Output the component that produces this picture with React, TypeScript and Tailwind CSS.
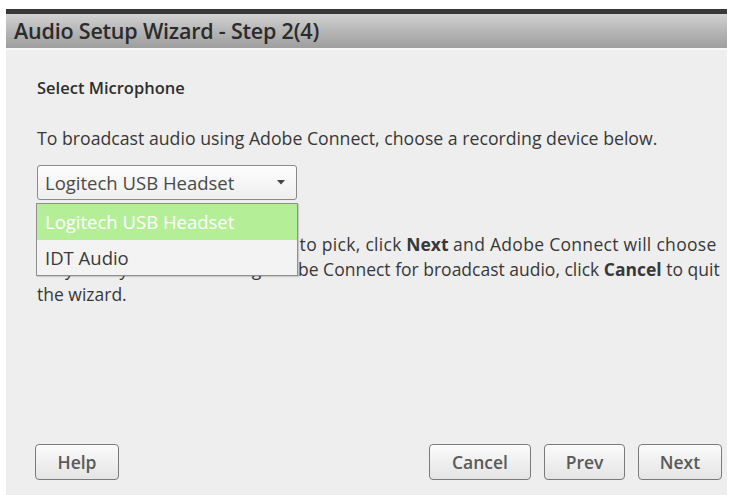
import React from "react";

const font = { fontFamily: '"Open Sans", "Liberation Sans", sans-serif' };

const WizardButton = ({ label, className }: { label: string; className?: string }) => (
  <button
    className={
      "h-[36px] rounded-[4px] border border-[#7a7a7a] bg-gradient-to-b from-[#fbfbfb] to-[#e4e4e4] text-[17.5px] font-semibold text-[#5a5a5a] shadow-[inset_0_1px_0_#ffffff] " +
      (className ?? "")
    }
  >
    {label}
  </button>
);

const App = () => {
  return (
    <div
      className="w-[729px] h-[495px] bg-white pl-[6px] pr-[2px] pt-[9px] flex flex-col overflow-hidden"
      style={font}
    >
      {/* window frame top edge */}
      <div className="h-[5px] bg-[#383838]" />

      {/* title bar */}
      <div className="h-[34px] bg-gradient-to-b from-[#d2d2d2] via-[#b6b6b6] to-[#9e9e9e] flex items-center pl-[8px]">
        <span className="text-[21.5px] font-semibold text-[#2b2b2b] tracking-[-0.2px]">
          Audio Setup Wizard - Step 2(4)
        </span>
      </div>
      <div className="h-[2px] bg-[#f8f8f8]" />

      {/* body */}
      <div className="flex-1 bg-[#eeeeee] pl-[31px] pr-[5px] pb-[15px] flex flex-col text-[#383838]">
        <div className="mt-[28px] text-[16.5px] font-semibold text-[#2e2e2e] leading-[20px]">
          Select Microphone
        </div>

        <p className="mt-[30px] text-[17.7px] leading-[20px] whitespace-nowrap">
          To broadcast audio using Adobe Connect, choose a recording device below.
        </p>

        {/* device select */}
        <div className="relative mt-[17px] w-[260px]">
          <div className="h-[35px] rounded-[3px] border border-[#8a8a8a] bg-gradient-to-b from-[#fdfdfd] to-[#efefef] flex items-center justify-between pl-[7px] pr-[11px]">
            <span className="text-[18.5px] text-[#4a4a4a]">Logitech USB Headset</span>
            <svg width="8" height="5" viewBox="0 0 8 5">
              <path d="M0 0 H8 L4 4.5 Z" fill="#444" />
            </svg>
          </div>

          {/* open list */}
          <div className="absolute left-[-1px] top-[38px] w-[262px] border border-[#8f8f8f] bg-[#f3f3f3] shadow-[1px_1px_1px_rgba(0,0,0,0.15)] z-10">
            <div className="h-[36px] bg-[#b4ef98] flex items-center pl-[8px] text-[18.5px] text-white">
              Logitech USB Headset
            </div>
            <div className="h-[35px] flex items-center pl-[8px] text-[18.5px] text-[#3a3a3a]">
              IDT Audio
            </div>
          </div>
        </div>

        <p className="mt-[32px] text-[17.5px] leading-[25px] whitespace-nowrap">
          If you are not sure which device <span className="tracking-[0.3px]">to pick, click</span>{" "}
          <span className="font-bold">Next</span>{" "}
          <span className="tracking-[0.3px]">and Adobe Connect will choose</span>
          <br />
          for you. If you are not using Adobe Connect for broadcast audio, click{" "}
          <span className="font-bold">Cancel</span> to quit
          <br />
          the wizard.
        </p>

        {/* footer buttons */}
        <div className="mt-auto flex items-center">
          <WizardButton label="Help" className="ml-[-2px] w-[84px]" />
          <div className="ml-auto flex gap-[13px]">
            <WizardButton label="Cancel" className="w-[102px]" />
            <WizardButton label="Prev" className="w-[81px]" />
            <WizardButton label="Next" className="w-[84px]" />
          </div>
        </div>
      </div>
    </div>
  );
};

export default App;
